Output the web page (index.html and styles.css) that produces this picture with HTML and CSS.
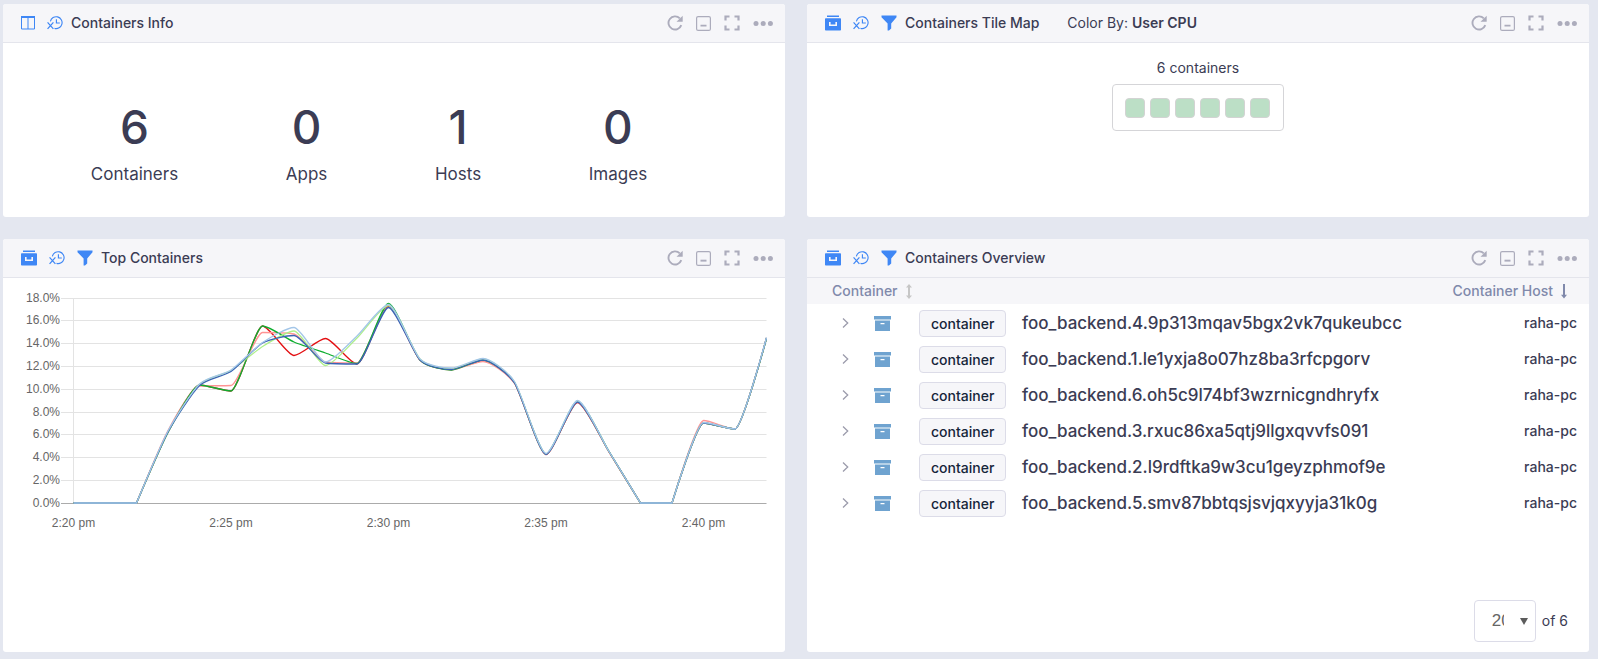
FILE: index.html
```html
<!DOCTYPE html>
<html lang="en">
<head>
<meta charset="utf-8">
<title>Containers</title>
<link rel="stylesheet" href="styles.css">
</head>
<body>
<svg class="sprite" aria-hidden="true">
  <symbol id="i-columns" viewBox="0 0 14 14"><path d="M.5 1.5h13v11.500h-13zM7 2v11" fill="none" stroke="currentColor"/><path d="M0 0h14v2H0z" fill="currentColor"/></symbol>
  <symbol id="i-clock" viewBox="0 0 17 14"><path d="M3.600 5.200a6.300 6.300 0 1 1 4.400 7.500M10 3v4h3.600" fill="none" stroke="currentColor" stroke-width="1.200"/><path d="M.6 6.400l6.200 6.800M6.800 6.400L.6 13.200" fill="none" stroke="currentColor" stroke-width="1.300"/></symbol>
  <symbol id="i-archive" viewBox="0 0 16 16"><path d="M2 .5h12V2H2zM.8 3.200h14.400q.8 0 .8.8v10.700q0 .8-.8.800H.8q-.8 0-.8-.800V4q0-.8.8-.8zM4 7v4h8V7h-1.600v2.400H5.600V7z" fill="currentColor" fill-rule="evenodd"/></symbol>
  <symbol id="i-funnel" viewBox="0 0 16 16"><path d="M.5.500h15v1.700L10.200 8.500v5L8 15.500H6.600v-7L.5 2.200z" fill="currentColor"/></symbol>
  <symbol id="i-refresh" viewBox="0 0 16 16"><path d="M14.300 10.200A6.600 6.600 0 1 1 12.800 3.300" fill="none" stroke="currentColor" stroke-width="1.900"/><path d="M15.700.8v5.900H9.500z" fill="currentColor"/></symbol>
  <symbol id="i-minimize" viewBox="0 0 15 15"><rect x=".6" y=".6" width="13.800" height="13.800" rx="1.500" fill="none" stroke="currentColor" stroke-width="1.200"/><path d="M4.500 8.700h6v1.900h-6z" fill="currentColor"/></symbol>
  <symbol id="i-expand" viewBox="0 0 16 16"><path d="M1.500 5.500v-4h4M10.500 1.500h4v4M14.500 10.500v4h-4M5.500 14.500h-4v-4" fill="none" stroke="currentColor" stroke-width="2.200"/></symbol>
  <symbol id="i-dots" viewBox="0 0 20 16"><circle cx="3" cy="8.500" r="2.500" fill="currentColor"/><circle cx="10.200" cy="8.500" r="2.500" fill="currentColor"/><circle cx="17.400" cy="8.500" r="2.500" fill="currentColor"/></symbol>
  <symbol id="i-box" viewBox="0 0 17 15"><path d="M0 0h17v3.500H0zM1 4.600h15V15H1zM6.500 7v1.200h4V7z" fill="currentColor" fill-rule="evenodd"/></symbol>
  <symbol id="i-chevron" viewBox="0 0 7 12"><path d="M1 1.500L5.700 6 1 10.500" fill="none" stroke="currentColor" stroke-width="1.300"/></symbol>
  <symbol id="i-sort" viewBox="0 0 6 15"><path d="M3 0l3 3.500H4v8h2L3 15l-3-3.500h2v-8H0z" fill="currentColor"/></symbol>
  <symbol id="i-down" viewBox="0 0 6 15"><path d="M2 0h2v10.800h2L3 14.500l-3-3.700h2z" fill="currentColor"/></symbol>
</svg>

<main class="board">
  <section class="card">
    <header class="card-head">
      <div class="icons"><svg class="ic14"><use href="#i-columns"/></svg><svg class="ic-clock"><use href="#i-clock"/></svg></div>
      <h2 class="title">Containers Info</h2>
      <div class="tools">
        <button aria-label="Refresh"><svg class="ic16"><use href="#i-refresh"/></svg></button><button aria-label="Minimize"><svg class="ic15"><use href="#i-minimize"/></svg></button><button aria-label="Full screen"><svg class="ic16"><use href="#i-expand"/></svg></button><button aria-label="More"><svg class="ic-dots"><use href="#i-dots"/></svg></button>
      </div>
    </header>
    <div class="stats">
      <div class="stat"><span class="num">6</span><span class="lbl">Containers</span></div>
      <div class="stat"><span class="num">0</span><span class="lbl">Apps</span></div>
      <div class="stat"><span class="num">1</span><span class="lbl">Hosts</span></div>
      <div class="stat"><span class="num">0</span><span class="lbl">Images</span></div>
    </div>
  </section>

  <section class="card">
    <header class="card-head">
      <div class="icons"><svg class="ic16"><use href="#i-archive"/></svg><svg class="ic-clock"><use href="#i-clock"/></svg><svg class="ic16"><use href="#i-funnel"/></svg></div>
      <h2 class="title">Containers Tile Map</h2>
      <p class="colorby">Color By: <b>User CPU</b></p>
      <div class="tools">
        <button aria-label="Refresh"><svg class="ic16"><use href="#i-refresh"/></svg></button><button aria-label="Minimize"><svg class="ic15"><use href="#i-minimize"/></svg></button><button aria-label="Full screen"><svg class="ic16"><use href="#i-expand"/></svg></button><button aria-label="More"><svg class="ic-dots"><use href="#i-dots"/></svg></button>
      </div>
    </header>
    <div class="tilemap">
      <p class="count">6 containers</p>
      <div class="tiles"><i></i><i></i><i></i><i></i><i></i><i></i></div>
    </div>
  </section>

  <section class="card">
    <header class="card-head">
      <div class="icons"><svg class="ic16"><use href="#i-archive"/></svg><svg class="ic-clock"><use href="#i-clock"/></svg><svg class="ic16"><use href="#i-funnel"/></svg></div>
      <h2 class="title">Top Containers</h2>
      <div class="tools">
        <button aria-label="Refresh"><svg class="ic16"><use href="#i-refresh"/></svg></button><button aria-label="Minimize"><svg class="ic15"><use href="#i-minimize"/></svg></button><button aria-label="Full screen"><svg class="ic16"><use href="#i-expand"/></svg></button><button aria-label="More"><svg class="ic-dots"><use href="#i-dots"/></svg></button>
      </div>
    </header>
    <svg class="chart" id="chart" viewBox="0 0 782 260" role="img" aria-label="Top containers by CPU"></svg>
  </section>

  <section class="card">
    <header class="card-head">
      <div class="icons"><svg class="ic16"><use href="#i-archive"/></svg><svg class="ic-clock"><use href="#i-clock"/></svg><svg class="ic16"><use href="#i-funnel"/></svg></div>
      <h2 class="title">Containers Overview</h2>
      <div class="tools">
        <button aria-label="Refresh"><svg class="ic16"><use href="#i-refresh"/></svg></button><button aria-label="Minimize"><svg class="ic15"><use href="#i-minimize"/></svg></button><button aria-label="Full screen"><svg class="ic16"><use href="#i-expand"/></svg></button><button aria-label="More"><svg class="ic-dots"><use href="#i-dots"/></svg></button>
      </div>
    </header>
    <table class="list">
      <thead>
        <tr><th colspan="4"><button>Container <svg class="ic-sort muted"><use href="#i-sort"/></svg></button></th><th class="host"><button>Container Host <svg class="ic-sort"><use href="#i-down"/></svg></button></th></tr>
      </thead>
      <tbody>
        <tr><td class="c-exp"><button aria-label="Expand"><svg class="ic-chev"><use href="#i-chevron"/></svg></button></td><td class="c-ico"><svg class="ic-box"><use href="#i-box"/></svg></td><td class="c-tag"><span class="tag">container</span></td><td class="c-name">foo_backend.4.9p313mqav5bgx2vk7qukeubcc</td><td class="host">raha-pc</td></tr>
        <tr><td class="c-exp"><button aria-label="Expand"><svg class="ic-chev"><use href="#i-chevron"/></svg></button></td><td class="c-ico"><svg class="ic-box"><use href="#i-box"/></svg></td><td class="c-tag"><span class="tag">container</span></td><td class="c-name">foo_backend.1.le1yxja8o07hz8ba3rfcpgorv</td><td class="host">raha-pc</td></tr>
        <tr><td class="c-exp"><button aria-label="Expand"><svg class="ic-chev"><use href="#i-chevron"/></svg></button></td><td class="c-ico"><svg class="ic-box"><use href="#i-box"/></svg></td><td class="c-tag"><span class="tag">container</span></td><td class="c-name">foo_backend.6.oh5c9l74bf3wzrnicgndhryfx</td><td class="host">raha-pc</td></tr>
        <tr><td class="c-exp"><button aria-label="Expand"><svg class="ic-chev"><use href="#i-chevron"/></svg></button></td><td class="c-ico"><svg class="ic-box"><use href="#i-box"/></svg></td><td class="c-tag"><span class="tag">container</span></td><td class="c-name">foo_backend.3.rxuc86xa5qtj9llgxqvvfs091</td><td class="host">raha-pc</td></tr>
        <tr><td class="c-exp"><button aria-label="Expand"><svg class="ic-chev"><use href="#i-chevron"/></svg></button></td><td class="c-ico"><svg class="ic-box"><use href="#i-box"/></svg></td><td class="c-tag"><span class="tag">container</span></td><td class="c-name">foo_backend.2.l9rdftka9w3cu1geyzphmof9e</td><td class="host">raha-pc</td></tr>
        <tr><td class="c-exp"><button aria-label="Expand"><svg class="ic-chev"><use href="#i-chevron"/></svg></button></td><td class="c-ico"><svg class="ic-box"><use href="#i-box"/></svg></td><td class="c-tag"><span class="tag">container</span></td><td class="c-name">foo_backend.5.smv87bbtqsjsvjqxyyja31k0g</td><td class="host">raha-pc</td></tr>
      </tbody>
    </table>
    <footer class="pager">
      <div class="pick">
        <select aria-label="Rows per page"><option>20</option><option>50</option></select>
        <svg class="ic-caret" viewBox="0 0 8 7"><path d="M0 0h8L4 7z" fill="#5c5c5c"/></svg>
      </div>
      <span>of 6</span>
    </footer>
  </section>
</main>
<script src="chart.js"></script>
</body>
</html>
```
FILE: styles.css
```css
* { box-sizing: border-box; }
body {
  margin: 0;
  background: #e4e7f0;
  color: #3b3c54;
  font: 400 14px/20px Inter, "Liberation Sans", sans-serif;
}
button { margin: 0; padding: 0; border: 0; background: none; color: inherit; font: inherit; cursor: pointer; }
h2, p { margin: 0; }
svg { display: block; flex: none; }
.sprite { position: absolute; width: 0; height: 0; }

.board {
  display: grid;
  grid-template-columns: repeat(2, minmax(0, 1fr));
  grid-template-rows: minmax(213px, auto) 1fr;
  gap: 22px;
  min-height: 100vh;
  padding: 4px 9px 7px 3px;
}
.card { display: flex; flex-direction: column; background: #fff; border-radius: 3px; overflow: hidden; }
.card-head {
  display: flex;
  align-items: center;
  min-height: 39px;
  padding: 0 12px 0 18px;
  background: #f6f6f9;
  border-bottom: 1px solid #e4e5ec;
}
.icons { display: flex; align-items: center; gap: 12px; margin-right: 8px; color: #3f87f5; }
.title { font-size: 14px; line-height: 20px; font-weight: 500; }
.colorby { margin-left: 28px; }
.colorby b { font-weight: 600; }
.tools { display: flex; align-items: center; gap: 13px; margin-left: auto; color: #acacbc; }
.ic14 { width: 14px; height: 14px; }
.ic15 { width: 15px; height: 15px; }
.ic16 { width: 16px; height: 16px; }
.ic-clock { width: 16px; height: 14px; }
.ic-dots { width: 20px; height: 16px; }
.ic-sort { width: 6px; height: 15px; }
.ic-chev { width: 7px; height: 12px; }
.ic-box { width: 17px; height: 15px; }
.ic-caret { width: 8px; height: 7px; }

.stats { display: flex; justify-content: space-around; padding: 56px 84px 0 34px; }
.stat { display: flex; flex-direction: column; align-items: center; }
.num { font-size: 46px; line-height: 56px; font-weight: 500; }
.lbl { margin-top: 7px; font-size: 17px; line-height: 24px; }

.tilemap { display: flex; flex-direction: column; align-items: center; padding-top: 15px; }
.count { font-size: 14px; }
.tiles { display: flex; gap: 5px; margin-top: 6px; padding: 13px 13px 12px 12px; border: 1px solid #d5d5d8; border-radius: 4px; }
.tiles i { width: 20px; height: 20px; background: #bcdfc6; border: 1px solid #d3d3d3; border-radius: 4px; }

.chart { width: 100%; height: auto; }
.chart text { font: 12px "Liberation Sans", Arial, sans-serif; fill: #666; }
.chart path { fill: none; stroke-width: 1.300px; }

.list { width: 100%; border-collapse: collapse; }
.list th { height: 26px; padding: 0 0 0 25px; background: #f6f6f9; color: #8089ab; font-size: 14px; font-weight: 500; text-align: left; }
.list th button { display: inline-flex; align-items: center; gap: 8px; vertical-align: top; }
.list th.host { padding-right: 22px; }
.list .host { text-align: right; }
.list td { height: 36px; padding: 0; font-weight: 500; }
.list td button { display: block; }
.list tbody::before { content: ""; display: table-row; height: 1px; }
.muted { color: #c6c6c6; }
.list .c-exp { width: 67px; padding-left: 35px; color: #9c9cac; }
.c-ico { width: 45px; color: #6fa3d0; }
.c-tag { width: 103px; }
.tag {
  display: inline-block;
  padding: 3px 11px 2px;
  background: #f6f6f9;
  border: 1px solid #dcdce8;
  border-radius: 4px;
  color: #15253a;
}
.list .c-name { font-size: 17px; }
.list td.host { padding-right: 12px; }

.pager { display: flex; justify-content: flex-end; align-items: center; gap: 6px; margin-top: auto; padding: 0 21px 10px 0; }
.pick { display: grid; align-items: center; justify-items: end; }
.pick > * { grid-area: 1 / 1; }
.pick select {
  appearance: none;
  width: 62px;
  height: 42px;
  padding: 0 31px 0 17px;
  border: 1px solid #dcdce8;
  border-radius: 4px;
  background: #fff;
  color: #666;
  font: 400 17px/24px "Liberation Sans", Arial, sans-serif;
}
.ic-caret { margin-right: 8px; pointer-events: none; }
```
FILE: chart.js
```js
const svg = document.getElementById('chart');
const NS = 'http://www.w3.org/2000/svg';
const X0 = 70.5, STEP = 31.5, BASE = 225;

function add(name, attrs, text) {
  const el = document.createElementNS(NS, name);
  for (const k in attrs) el.setAttribute(k, attrs[k]);
  if (text) el.textContent = text;
  svg.appendChild(el);
}

const grid = [225.5, 202.5, 179.5, 156.5, 134.5, 111.5, 88.5, 65.5, 42.5, 20.5];
grid.forEach((y, i) => {
  add('line', { x1: 58, x2: 763.5, y1: y, y2: y, stroke: i ? '#e3e3e3' : '#ababab' });
  add('text', { x: 57, y: y + 3.5, 'text-anchor': 'end' }, (i * 2).toFixed(1) + '%');
});
add('line', { x1: X0, x2: X0, y1: 20, y2: 225, stroke: '#e3e3e3' });
['2:20 pm', '2:25 pm', '2:30 pm', '2:35 pm', '2:40 pm'].forEach((t, i) => {
  add('text', { x: X0 + i * 5 * STEP, y: 249, 'text-anchor': 'middle' }, t);
});

// Heights above the zero line, one value per minute from 2:20.
const series = [
  ['#e30f12', [0, 0, 0, 71, 118, 112, 177, 147.5, 164.5, 139, 197, 143, 133.5, 143, 120, 48.5, 100.5, 51, 0, 0, 80, 74, 165]],
  ['#ff9494', [0, 0, 0, 72.5, 117, 117.5, 170.5, 169, 141, 140, 198, 143, 133, 141.5, 119.5, 48.5, 101, 51, 0, 0, 82.5, 74, 165]],
  ['#0fae31', [0, 0, 0, 70.5, 118, 112, 177, 161, 150, 139.5, 199.5, 143, 133, 143, 120.5, 49, 101.5, 51.5, 0, 0, 80, 74, 164.5]],
  ['#aef08a', [0, 0, 0, 71, 118.5, 132.5, 156.5, 172, 137.5, 165, 197.5, 144, 134, 144, 121, 49, 102, 51.5, 0, 0, 80, 74, 165]],
  ['#3a63b5', [0, 0, 0, 71, 117.5, 131.5, 160, 167.5, 140, 139, 195.5, 143, 133.5, 143, 120, 48.5, 101, 51.5, 0, 0, 80, 74, 165]],
  ['#a3c6e8', [0, 0, 0, 72, 119, 133, 160.5, 175.5, 141, 167, 198.5, 144, 135, 144.5, 121.5, 49.5, 102.5, 51.5, 0, 0, 80.5, 74, 165.5]]
];

// Bezier handles on both sides of b, held inside the range of its neighbours.
// Next to a flat stretch the handles collapse, so the line leaves it sharply.
function handles(a, b, c) {
  if (a.y === b.y || b.y === c.y) return [b.x, b.y, b.x, b.y];
  const k = 0.22;
  const slope = (c.y - a.y) / (c.x - a.x);
  const d = k * STEP;
  let ly = b.y - slope * d, ry = b.y + slope * d;
  const lo = Math.min(a.y, b.y), hi = Math.max(a.y, b.y);
  if (ly < lo || ly > hi) { ly = Math.min(hi, Math.max(lo, ly)); ry = 2 * b.y - ly; }
  const lo2 = Math.min(b.y, c.y), hi2 = Math.max(b.y, c.y);
  if (ry < lo2 || ry > hi2) { ry = Math.min(hi2, Math.max(lo2, ry)); ly = 2 * b.y - ry; }
  return [b.x - d, ly, b.x + d, ry];
}

for (const [stroke, values] of series) {
  const p = values.map((v, i) => ({ x: X0 + i * STEP, y: BASE - v }));
  let d = `M${p[0].x} ${p[0].y}`;
  let out = [p[0].x, p[0].y];
  for (let i = 1; i < p.length; i++) {
    const h = i < p.length - 1 ? handles(p[i - 1], p[i], p[i + 1]) : [p[i].x, p[i].y];
    d += `C${out[0]} ${out[1]} ${h[0]} ${h[1]} ${p[i].x} ${p[i].y}`;
    out = [h[2], h[3]];
  }
  add('path', { d, stroke });
}
```
